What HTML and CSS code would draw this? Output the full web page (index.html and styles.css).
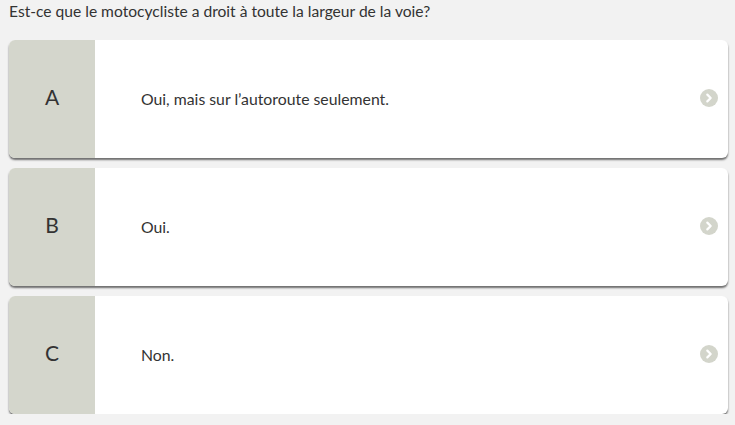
FILE: index.html
```html
<!DOCTYPE html>
<html lang="fr">
<head>
<meta charset="utf-8">
<link rel="stylesheet" href="styles.css">
</head>
<body>
<p class="question">Est-ce que le motocycliste a droit à toute la largeur de la voie?</p>
<div class="answers">
  <div class="card">
    <div class="letter">A</div>
    <div class="text">Oui, mais sur l’autoroute seulement.</div>
    <span class="go"><svg viewBox="0 0 18 18" width="18" height="18"><circle cx="9" cy="9" r="9" fill="#d3d5cb"/><path d="M7.3 5.6 L10.7 9 L7.3 12.4" fill="none" stroke="#fff" stroke-width="2.2" stroke-linecap="round" stroke-linejoin="round"/></svg></span>
  </div>
  <div class="card">
    <div class="letter">B</div>
    <div class="text">Oui.</div>
    <span class="go"><svg viewBox="0 0 18 18" width="18" height="18"><circle cx="9" cy="9" r="9" fill="#d3d5cb"/><path d="M7.3 5.6 L10.7 9 L7.3 12.4" fill="none" stroke="#fff" stroke-width="2.2" stroke-linecap="round" stroke-linejoin="round"/></svg></span>
  </div>
  <div class="card">
    <div class="letter">C</div>
    <div class="text">Non.</div>
    <span class="go"><svg viewBox="0 0 18 18" width="18" height="18"><circle cx="9" cy="9" r="9" fill="#d3d5cb"/><path d="M7.3 5.6 L10.7 9 L7.3 12.4" fill="none" stroke="#fff" stroke-width="2.2" stroke-linecap="round" stroke-linejoin="round"/></svg></span>
  </div>
</div>
</body>
</html>
```
FILE: styles.css
```css
html, body {
  margin: 0;
  padding: 0;
  background: #f2f2f2;
  font-family: Lato, "Open Sans", sans-serif;
  color: #333;
}
.question {
  margin: 0;
  padding: 0 0 0 9px;
  font-size: 15.6px;
  line-height: 22px;
  color: #333;
}
.answers {
  display: flex;
  flex-direction: column;
  gap: 10px;
  padding: 18px 7px 0 9px;
}
.card {
  display: flex;
  align-items: center;
  height: 118px;
  background: #fff;
  border-radius: 6px;
  overflow: hidden;
  box-shadow: 0 2px 2px rgba(0, 0, 0, 0.55);
}
.letter {
  width: 86px;
  align-self: stretch;
  display: flex;
  align-items: center;
  justify-content: center;
  padding-bottom: 6px;
  box-sizing: border-box;
  background: #d4d6cc;
  font-size: 21px;
  color: #333;
}
.text {
  flex: 1;
  padding-left: 46px;
  padding-bottom: 2px;
  font-size: 15.8px;
  color: #333;
}
.go {
  display: flex;
  margin-right: 10px;
  margin-bottom: 3px;
}
```
